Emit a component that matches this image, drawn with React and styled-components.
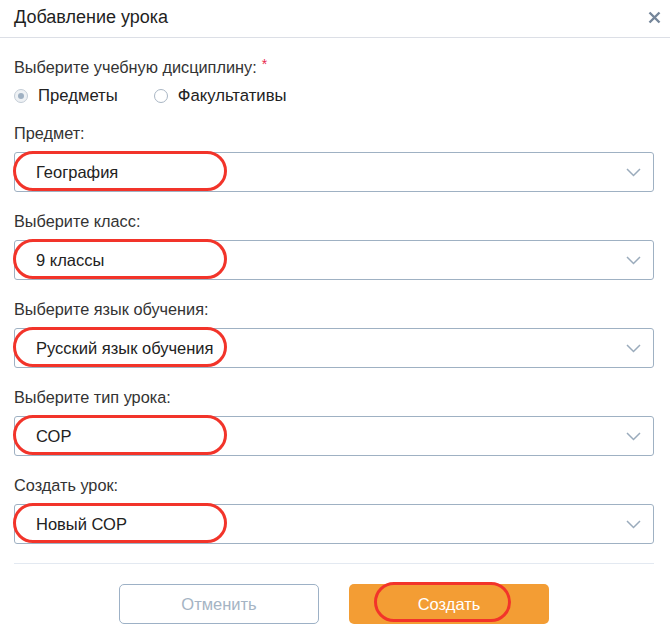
import React, { useState } from "react";
import styled, { createGlobalStyle } from "styled-components";

const GlobalStyle = createGlobalStyle`
  body {
    margin: 0;
    background: #ffffff;
    font-family: "Liberation Sans", Arial, sans-serif;
    color: #333333;
  }
`;

const Modal = styled.div`
  width: 670px;
  height: 635px;
  background: #fff;
  overflow: hidden;
`;

const Header = styled.div`
  height: 37px;
  display: flex;
  align-items: center;
  justify-content: space-between;
  padding: 0 8px 0 14px;
  border-bottom: 1px solid #dcdfe6;
`;

const Title = styled.h1`
  margin: 0 0 2px 0;
  font-size: 18px;
  font-weight: 400;
  color: #1f1f1f;
`;

const CloseButton = styled.button`
  border: none;
  background: none;
  padding: 0;
  width: 16px;
  height: 16px;
  margin-bottom: 2px;
  display: flex;
  align-items: center;
  justify-content: center;
  cursor: pointer;
  svg {
    width: 13px;
    height: 13px;
  }
`;

const Body = styled.div`
  padding: 19px 16px 0 14px;
`;

const Label = styled.div`
  font-size: 16.3px;
  line-height: 20px;
  color: #333;
`;

const Required = styled.span`
  color: #e8294f;
  font-size: 14px;
  vertical-align: top;
  margin-left: 5px;
  position: relative;
  top: -3px;
`;

const RadioRow = styled.div`
  display: flex;
  align-items: center;
  gap: 36px;
  margin-top: 9px;
  margin-bottom: 17px;
`;

const RadioOption = styled.label`
  display: flex;
  align-items: center;
  gap: 10px;
  font-size: 16.7px;
  line-height: 20px;
  color: #222;
  cursor: pointer;
`;

const RadioCircle = styled.span`
  width: 14px;
  height: 14px;
  box-sizing: border-box;
  border-radius: 50%;
  border: 1px solid ${(p) => (p.checked ? "#c3ccd6" : "#a9b6c4")};
  background: ${(p) => (p.checked ? "#eef1f4" : "#fff")};
  display: flex;
  align-items: center;
  justify-content: center;
  &::after {
    content: "";
    width: 6px;
    height: 6px;
    border-radius: 50%;
    background: ${(p) => (p.checked ? "#9fb0c2" : "transparent")};
  }
`;

const Field = styled.div`
  margin-bottom: 19px;
`;

const SelectBox = styled.div`
  position: relative;
  margin-top: 9px;
  height: 40px;
  box-sizing: border-box;
  border: 1px solid #9fb1c3;
  border-radius: 3px;
  display: flex;
  align-items: center;
  justify-content: space-between;
  padding: 0 12px 0 21px;
  font-size: 16.5px;
  color: #222;
  svg {
    width: 15px;
    height: 9px;
  }
`;

const Highlight = styled.span`
  position: absolute;
  left: ${(p) => p.left}px;
  top: ${(p) => p.top}px;
  width: ${(p) => p.width}px;
  height: ${(p) => p.height}px;
  box-sizing: border-box;
  border: 3px solid #f2342a;
  border-radius: 22px;
  pointer-events: none;
`;

const Divider = styled.div`
  height: 1px;
  background: #e3e9f1;
  margin-top: 1px;
`;

const Footer = styled.div`
  display: flex;
  justify-content: center;
  gap: 30px;
  padding: 20px 2px 0 0;
`;

const Button = styled.button`
  position: relative;
  width: 200px;
  height: 40px;
  box-sizing: border-box;
  border-radius: 5px;
  font-family: "Liberation Sans", Arial, sans-serif;
  font-size: 16.5px;
  cursor: pointer;
  border: ${(p) => (p.primary ? "none" : "1.5px solid #9db1c6")};
  background: ${(p) => (p.primary ? "#f39d34" : "#fff")};
  color: ${(p) => (p.primary ? "#ffffff" : "#a5b4c4")};
`;

const Chevron = () => (
  <svg viewBox="0 0 15 9" fill="none">
    <path d="M1 1l6.5 6.5L14 1" stroke="#9aabbc" strokeWidth="1.5" />
  </svg>
);

const fields = [
  { label: "Предмет:", value: "География" },
  { label: "Выберите класс:", value: "9 классы" },
  { label: "Выберите язык обучения:", value: "Русский язык обучения" },
  { label: "Выберите тип урока:", value: "СОР" },
  { label: "Создать урок:", value: "Новый СОР" },
];

export default function App() {
  const [discipline, setDiscipline] = useState("subjects");

  return (
    <Modal>
      <GlobalStyle />
      <Header>
        <Title>Добавление урока</Title>
        <CloseButton>
          <svg viewBox="0 0 13 13">
            <path d="M1.5 1.5l10 10M11.5 1.5l-10 10" stroke="#75869a" strokeWidth="2.4" />
          </svg>
        </CloseButton>
      </Header>
      <Body>
        <Label>
          Выберите учебную дисциплину:<Required>*</Required>
        </Label>
        <RadioRow>
          <RadioOption onClick={() => setDiscipline("subjects")}>
            <RadioCircle checked={discipline === "subjects"} />
            Предметы
          </RadioOption>
          <RadioOption onClick={() => setDiscipline("electives")}>
            <RadioCircle checked={discipline === "electives"} />
            Факультативы
          </RadioOption>
        </RadioRow>

        {fields.map((f) => (
          <Field key={f.label}>
            <Label>{f.label}</Label>
            <SelectBox>
              {f.value}
              <Chevron />
              <Highlight left={-2} top={-2} width={214} height={40} />
            </SelectBox>
          </Field>
        ))}

        <Divider />
      </Body>
      <Footer>
        <Button>Отменить</Button>
        <Button primary>
          Создать
          <Highlight left={25} top={-2} width={137} height={40} />
        </Button>
      </Footer>
    </Modal>
  );
}
